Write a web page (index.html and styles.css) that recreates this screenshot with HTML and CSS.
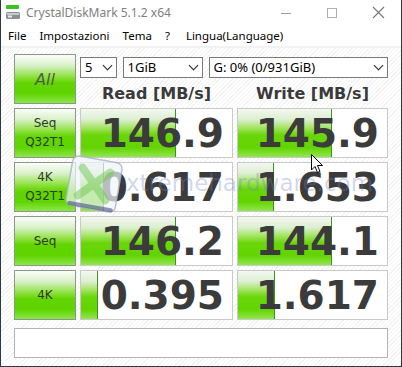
FILE: index.html
```html
<!DOCTYPE html>
<html lang="en">

<head>
    <meta charset="UTF-8">
    <meta name="viewport" content="width=device-width, initial-scale=1.0">
    <title>CrystalDiskMark 5.1.2 x64</title>
    <link rel="stylesheet" href="styles.css">
</head>

<body>
    <div class="window">
        <div class="titlebar">
            <svg class="app-icon" width="16" height="16" viewBox="0 0 16 16">
                <rect x="1" y="0" width="13" height="4" rx="1" fill="#3cc21e"/>
                <rect x="1" y="7" width="14" height="7" rx="1.5" fill="#8a8f94"/>
                <rect x="2" y="8" width="12" height="2" fill="#c7cbce"/>
                <rect x="3" y="10.5" width="4" height="2" fill="#e9ecee"/>
            </svg>
            <span class="title">CrystalDiskMark 5.1.2 x64</span>
            <div class="controls">
                <svg width="46" height="24" viewBox="0 0 46 24"><line x1="18" y1="13.5" x2="28" y2="13.5" stroke="#9a9a9a" stroke-width="1"/></svg>
                <svg width="46" height="24" viewBox="0 0 46 24"><rect x="18.5" y="8.5" width="9" height="9" fill="none" stroke="#b0b0b0" stroke-width="1"/></svg>
                <svg width="46" height="24" viewBox="0 0 46 24"><path d="M18 7 L29 18 M29 7 L18 18" stroke="#777" stroke-width="1.1"/></svg>
            </div>
        </div>

        <div class="menubar">
            <span>File</span>
            <span>Impostazioni</span>
            <span>Tema</span>
            <span class="help">?</span>
            <span>Lingua(Language)</span>
        </div>

        <div class="content">
            <div class="grid">
                <div class="btn all">All</div>
                <div class="top">
                    <div class="selects">
                        <div class="select s-count">5<i></i></div>
                        <div class="select s-size">1GiB<i></i></div>
                        <div class="select s-drive">G: 0% (0/931GiB)<i></i></div>
                    </div>
                    <div class="heads">
                        <div>Read [MB/s]</div>
                        <div>Write [MB/s]</div>
                    </div>
                </div>

                <div class="btn"><span>Seq<br>Q32T1</span></div>
                <div class="value"><div class="bar" style="width: 95px"></div><span>146.9</span></div>
                <div class="value"><div class="bar" style="width: 94px"></div><span>145.9</span></div>

                <div class="btn"><span>4K<br>Q32T1</span></div>
                <div class="value"><div class="bar" style="width: 23px"></div><span>0.617</span></div>
                <div class="value"><div class="bar" style="width: 36px"></div><span>1.653</span></div>

                <div class="btn"><span>Seq</span></div>
                <div class="value"><div class="bar" style="width: 95px"></div><span>146.2</span></div>
                <div class="value"><div class="bar" style="width: 94px"></div><span>144.1</span></div>

                <div class="btn"><span>4K</span></div>
                <div class="value"><div class="bar" style="width: 17px"></div><span>0.395</span></div>
                <div class="value"><div class="bar" style="width: 37px"></div><span>1.617</span></div>
            </div>
            <div class="comment"></div>
        </div>

        <div class="watermark">
            <svg class="wm-logo" width="62" height="62" viewBox="0 0 62 62">
                <g transform="rotate(10 31 31)">
                    <rect x="6" y="6" width="50" height="50" rx="6" fill="rgba(240,243,250,0.7)" stroke="rgba(170,178,200,0.8)" stroke-width="1.5"/>
                    <path d="M10 54 L52 54" stroke="rgba(55,65,120,0.55)" stroke-width="4" stroke-linecap="round"/>
                    <path d="M17 17 L45 45 M45 17 L17 45" stroke="rgba(110,200,80,0.5)" stroke-width="8" stroke-linecap="round"/>
                </g>
            </svg>
            <span class="wm-text">xtremehardware.com</span>
        </div>

        <svg class="cursor" width="13" height="20" viewBox="0 0 13 20">
            <path d="M0.5 0.5 L0.5 16 L4 12.5 L6.5 18.5 L9 17.5 L6.5 11.5 L11.5 11.5 Z" fill="#fff" stroke="#000" stroke-width="1"/>
        </svg>
    </div>
</body>

</html>
```

FILE: styles.css
```css
body {
    margin: 0;
    background: #fff;
}

.window {
    position: relative;
    width: 400px;
    height: 366px;
    border: 1px solid #2b3a44;
    border-top: none;
    background: #fff;
    overflow: hidden;
    font-family: "Noto Sans", "Open Sans", sans-serif;
}

.titlebar {
    display: flex;
    align-items: center;
    height: 24px;
    background: #fff;
}

.app-icon {
    margin: 1px 5px 0 4px;
}

.title {
    font-size: 12px;
    color: #808080;
    flex: 1;
}

.controls {
    display: flex;
}

.menubar {
    display: flex;
    align-items: center;
    height: 22px;
    padding-left: 7px;
    font-size: 11.5px;
    color: #000;
    border-bottom: 2px solid #f2f2f2;
}

.menubar span {
    margin-right: 13px;
}

.menubar .help {
    margin-right: 16px;
}

.content {
    height: 318px;
    padding: 6px 0 0 13px;
    box-sizing: border-box;
    background: repeating-linear-gradient(135deg, #ffffff 0 2px, #f3f3f3 2px 3px);
}

.grid {
    display: grid;
    grid-template-columns: 62px 153px 151px;
    grid-auto-rows: 50px;
    column-gap: 4px;
    row-gap: 4px;
}

.btn {
    display: flex;
    align-items: center;
    justify-content: center;
    border: 1px solid #8a9a86;
    background: linear-gradient(to bottom, #fbfdfa 0%, #d9f1c9 22%, #8fe141 45%, #62d500 58%, #5ed400 80%, #8ee54c 100%);
    font-family: "DejaVu Sans", sans-serif;
    font-size: 12px;
    line-height: 19px;
    color: #2e3a28;
    text-align: center;
}

.btn.all {
    font-size: 16px;
    font-style: italic;
    color: #4e5e48;
}

.top {
    grid-column: 2 / 4;
    display: flex;
    flex-direction: column;
}

.selects {
    display: flex;
    gap: 6px;
    margin-top: 3px;
}

.select {
    position: relative;
    height: 19px;
    border: 1px solid #7a7a7a;
    background: #fff;
    font-size: 13px;
    line-height: 19px;
    padding-left: 4px;
    color: #000;
}

.select i {
    position: absolute;
    right: 5px;
    top: 4px;
    width: 6px;
    height: 6px;
    border-right: 1.6px solid #222;
    border-bottom: 1.6px solid #222;
    transform: rotate(45deg);
}

.s-count {
    width: 31px;
}

.s-size {
    width: 75px;
}

.s-drive {
    width: 176px;
}

.heads {
    display: flex;
    gap: 4px;
    margin-top: 6px;
    font-family: "DejaVu Sans", sans-serif;
    font-weight: bold;
    font-size: 16px;
    color: #3a3a3a;
}

.heads div {
    text-align: center;
}

.heads div:first-child {
    width: 153px;
}

.heads div:last-child {
    width: 151px;
}

.value {
    position: relative;
    display: flex;
    align-items: center;
    justify-content: flex-end;
    padding-right: 8px;
    border: 1px solid #c9c9c9;
    background: #fff;
}

.bar {
    position: absolute;
    left: 0;
    top: 0;
    bottom: 0;
    border-right: 1px solid #3f9420;
    box-sizing: border-box;
    background: linear-gradient(to bottom, #f3f7f1 0%, #dcefd0 22%, #a0e35c 40%, #6ad60a 54%, #62d400 80%, #92e64e 100%);
}

.value span {
    position: relative;
    font-family: "DejaVu Sans", sans-serif;
    font-weight: bold;
    font-size: 39px;
    color: #3b3b3b;
}

.comment {
    width: 372px;
    height: 28px;
    margin-top: 8px;
    border: 1px solid #b4b4b4;
    background: #fff;
}

.watermark {
    position: absolute;
    left: 62px;
    top: 153px;
    display: flex;
    align-items: center;
}

.wm-text {
    margin-left: 1px;
    margin-top: -3px;
    font-family: "DejaVu Sans", sans-serif;
    font-size: 23px;
    color: rgba(110, 130, 195, 0.32);
}

.cursor {
    position: absolute;
    left: 310px;
    top: 154px;
}
```
